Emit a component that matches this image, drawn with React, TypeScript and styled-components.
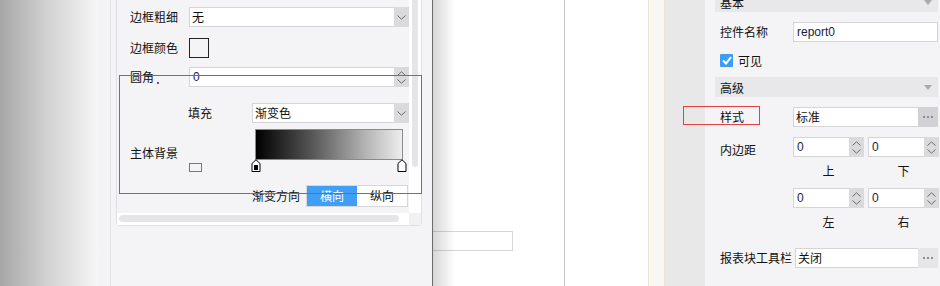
import React from "react";
import styled, { createGlobalStyle } from "styled-components";

const GlobalStyle = createGlobalStyle`
  html, body {
    margin: 0;
    padding: 0;
  }
  body {
    width: 940px;
    height: 286px;
    overflow: hidden;
    background: #ffffff;
    font-family: "Noto Sans CJK SC", "Liberation Sans", sans-serif;
    font-size: 12px;
    color: #111111;
  }
`;

const Screen = styled.div`
  position: relative;
  display: flex;
  width: 940px;
  height: 286px;
  overflow: hidden;
`;

const Backdrop = styled.div`
  flex: none;
  width: 98px;
  background: linear-gradient(to right, #a6a6a6 0%, #cfcfcf 45%, #f6f6f6 100%);
`;

const SidePanel = styled.div`
  flex: none;
  width: 335px;
  box-sizing: border-box;
  padding-left: 12px;
  background: #f4f4f6;
  border-right: 1px solid #6c6c6c;
`;

const SideInner = styled.div`
  height: 100%;
  padding-left: 5px;
  border-left: 1px solid #e3e3e7;
`;

const Card = styled.div`
  position: relative;
  width: 306px;
  height: 226px;
  box-sizing: border-box;
  display: grid;
  grid-template-columns: 292px 12px;
  grid-template-rows: 213px 12px;
  border: 1px solid #e0e0e4;
  border-top: none;
  border-radius: 0 0 4px 4px;
  background: #f4f4f6;
`;

const Rows = styled.div`
  display: flex;
  flex-direction: column;
  padding-top: 7px;
`;

const Row = styled.div<{ $top?: number; $h?: number }>`
  display: flex;
  align-items: center;
  height: ${(p) => p.$h ?? 20}px;
  margin-top: ${(p) => p.$top ?? 0}px;
`;

const Label = styled.span<{ $w?: number; $pad?: number }>`
  flex: none;
  box-sizing: border-box;
  width: ${(p) => p.$w ?? 72}px;
  padding-left: ${(p) => p.$pad ?? 13}px;
  line-height: 14px;
  white-space: nowrap;
`;

const Dot = styled.span`
  display: inline-block;
  width: 2px;
  height: 2px;
  margin-left: 3px;
  vertical-align: -2px;
  background: #8a3f9c;
`;

const Field = styled.div<{ $w: number }>`
  display: flex;
  width: ${(p) => p.$w}px;
  height: 20px;
  box-sizing: border-box;
  border: 1px solid #d5d5d8;
  background: #ffffff;
`;

const FieldText = styled.span<{ $latin?: boolean }>`
  flex: 1;
  padding-left: ${(p) => (p.$latin ? 3 : 2)}px;
  line-height: 18px;
  font-family: ${(p) =>
    p.$latin
      ? `"Liberation Sans", Arial, sans-serif`
      : `"Noto Sans CJK SC", sans-serif`};
  color: ${(p) => (p.$latin ? "#1b1b48" : "#111111")};
  white-space: nowrap;
  overflow: hidden;
`;

const SideButton = styled.span<{ $light?: boolean }>`
  flex: none;
  width: 15px;
  margin: -1px -1px -1px 0;
  display: flex;
  flex-direction: column;
  align-items: center;
  justify-content: center;
  background: ${(p) => (p.$light ? "#e6e6e8" : "#dadadd")};
`;

const MoreButton = styled.span<{ $light?: boolean }>`
  flex: none;
  width: 20px;
  margin: -1px -1px -1px 0;
  display: flex;
  align-items: center;
  justify-content: center;
  gap: 2px;
  background: ${(p) => (p.$light ? "#e6e6e8" : "#d2d2d6")};

  & > i {
    width: 2px;
    height: 2px;
    background: #8c8c90;
  }
`;

const Swatch = styled.span`
  width: 20px;
  height: 20px;
  box-sizing: border-box;
  border: 1px solid #222222;
  background: #f4f4f6;
`;

const GradientRow = styled.div`
  display: flex;
  height: 43px;
  margin-top: 6px;
`;

const MiniSwatch = styled.span`
  display: block;
  width: 13px;
  height: 9px;
  box-sizing: border-box;
  margin-top: 34px;
  border: 1px solid #df4a4a;
`;

const SwatchCell = styled.div`
  width: 63px;
`;

const Editor = styled.div`
  position: relative;
  width: 157px;
  padding-left: 4px;
`;

const GradientBar = styled.div`
  width: 148px;
  height: 31px;
  box-sizing: border-box;
  border: 1px solid #8a8a8a;
  background: linear-gradient(to right, #000000 0%, #5a5a5a 40%, #b4b4b4 75%, #ededed 100%);
`;

const Stop = styled.svg<{ $x: number }>`
  position: absolute;
  top: 30px;
  left: ${(p) => p.$x}px;
`;

const Segmented = styled.div`
  display: flex;
  width: 102px;
  height: 22px;
  box-sizing: border-box;
  border: 1px solid #d8d8dc;
  background: #ffffff;
`;

const Segment = styled.span<{ $active?: boolean }>`
  flex: 1;
  text-align: center;
  line-height: 20px;
  background: ${(p) => (p.$active ? "#419ef5" : "#ffffff")};
  color: ${(p) => (p.$active ? "#ffffff" : "#111111")};
`;

const VTrack = styled.div`
  background: #ffffff;
  padding-left: 3px;
`;

const VThumb = styled.div`
  width: 6px;
  height: 167px;
  border-radius: 0 0 3px 3px;
  background: #e5e5e7;
`;

const HTrack = styled.div`
  background: #ffffff;
  padding: 2px 0 0 2px;
`;

const HThumb = styled.div`
  width: 280px;
  height: 7px;
  border-radius: 4px;
  background: #e5e5e7;
`;

const Corner = styled.div`
  background: #f1f1f3;
`;

const Highlight = styled.div<{ $x: number; $y: number; $w: number; $h: number }>`
  position: absolute;
  left: ${(p) => p.$x}px;
  top: ${(p) => p.$y}px;
  width: ${(p) => p.$w}px;
  height: ${(p) => p.$h}px;
  box-sizing: border-box;
  border: 1px solid #e8403e;
  pointer-events: none;
`;

const Canvas = styled.div`
  position: relative;
  flex: none;
  display: flex;
  width: 215px;
  background: #ffffff;

  &::before {
    content: "";
    position: absolute;
    left: 0;
    top: 0;
    bottom: 0;
    width: 22px;
    background: linear-gradient(to right, rgba(0, 0, 0, 0.16), rgba(0, 0, 0, 0));
    pointer-events: none;
  }
`;

const Page = styled.div`
  width: 131px;
  border-right: 1px solid #c5c5c7;
  padding-top: 231px;
`;

const CanvasInput = styled.div`
  width: 80px;
  height: 20px;
  box-sizing: border-box;
  border: 1px solid #d6d6d8;
  border-left: none;
`;

const Ruler = styled.div`
  flex: none;
  width: 17px;
  box-sizing: border-box;
  background: #f8f7f4;
  border-left: 1px solid #eee3d1;
  border-right: 1px solid #eee3d1;
`;

const Gutter = styled.div`
  flex: none;
  width: 40px;
  background: #e8e8e9;
`;

const PropPanel = styled.div`
  flex: none;
  width: 235px;
  box-sizing: border-box;
  padding: 0 2px 0 10px;
  background: #f4f4f6;
`;

const PropScroll = styled.div`
  display: flex;
  flex-direction: column;
  margin-top: -8px;
`;

const SectionHead = styled.div<{ $top?: number }>`
  display: flex;
  align-items: center;
  justify-content: space-between;
  height: 20px;
  margin-top: ${(p) => p.$top ?? 0}px;
  padding: 0 6px 0 5px;
  background: #e8e8ea;
`;

const Caret = styled.span`
  width: 0;
  height: 0;
  border-left: 4px solid transparent;
  border-right: 4px solid transparent;
  border-top: 5px solid #a9a9ad;
`;

const PropRow = styled.div<{ $top?: number }>`
  display: flex;
  align-items: center;
  height: 20px;
  margin-top: ${(p) => p.$top ?? 0}px;
  padding-left: 5px;
`;

const CheckRow = styled.div`
  display: flex;
  align-items: center;
  gap: 5px;
  height: 13px;
  margin-top: 12px;
  padding-left: 5px;
`;

const CheckBox = styled.span`
  width: 13px;
  height: 13px;
  border-radius: 1px;
  background: #3f9cf3;
  display: flex;
  align-items: center;
  justify-content: center;
`;

const SpinGrid = styled.div<{ $top?: number }>`
  display: grid;
  grid-template-columns: 71px 71px;
  column-gap: 4px;
  margin-top: ${(p) => p.$top ?? 0}px;
  margin-left: 78px;
`;

const Caption = styled.span`
  margin-top: 7px;
  height: 14px;
  line-height: 14px;
  text-align: center;
`;

function Chevron({ up }: { up?: boolean }) {
  return (
    <svg width="9" height="5" viewBox="0 0 9 5">
      <path
        d={up ? "M0.5 4.5 L4.5 0.8 L8.5 4.5" : "M0.5 0.5 L4.5 4.2 L8.5 0.5"}
        fill="none"
        stroke="#6a6a6e"
        strokeWidth="1"
      />
    </svg>
  );
}

function Select({ w, value }: { w: number; value: string }) {
  return (
    <Field $w={w}>
      <FieldText>{value}</FieldText>
      <SideButton>
        <Chevron />
      </SideButton>
    </Field>
  );
}

function Spin({ w, value, light }: { w: number; value: string; light?: boolean }) {
  return (
    <Field $w={w}>
      <FieldText $latin>{value}</FieldText>
      <SideButton $light={light} style={{ gap: 3 }}>
        <Chevron up />
        <Chevron />
      </SideButton>
    </Field>
  );
}

function More({ w, value, light }: { w: number; value: string; light?: boolean }) {
  return (
    <Field $w={w}>
      <FieldText>{value}</FieldText>
      <MoreButton $light={light}>
        <i />
        <i />
        <i />
      </MoreButton>
    </Field>
  );
}

function StopMark({ x, filled }: { x: number; filled?: boolean }) {
  return (
    <Stop $x={x} width="10" height="13" viewBox="0 0 10 13">
      <path d="M5 0.8 L9 4.5 L9 12.5 L1 12.5 L1 4.5 Z" fill="#ffffff" stroke="#000000" strokeWidth="1" />
      {filled && <rect x="3" y="6" width="4" height="5" fill="#000000" />}
    </Stop>
  );
}

export default function App() {
  return (
    <>
      <GlobalStyle />
      <Screen>
        <Backdrop />
        <SidePanel>
          <SideInner>
            <Card>
              <Rows>
                <Row>
                  <Label>边框粗细</Label>
                  <Select w={220} value="无" />
                </Row>
                <Row $top={11}>
                  <Label>边框颜色</Label>
                  <Swatch />
                </Row>
                <Row $top={9}>
                  <Label>
                    圆角
                    <Dot />
                  </Label>
                  <Spin w={220} value="0" />
                </Row>
                <Row $top={16}>
                  <Label $w={135} $pad={71}>
                    填充
                  </Label>
                  <Select w={157} value="渐变色" />
                </Row>
                <GradientRow>
                  <Label style={{ paddingTop: 17 }}>主体背景</Label>
                  <SwatchCell>
                    <MiniSwatch />
                  </SwatchCell>
                  <Editor>
                    <GradientBar />
                    <StopMark x={0} filled />
                    <StopMark x={146} />
                  </Editor>
                </GradientRow>
                <Row $top={13} $h={22}>
                  <Label $w={189} $pad={135}>
                    渐变方向
                  </Label>
                  <Segmented>
                    <Segment $active>横向</Segment>
                    <Segment>纵向</Segment>
                  </Segmented>
                </Row>
              </Rows>
              <VTrack>
                <VThumb />
              </VTrack>
              <HTrack>
                <HThumb />
              </HTrack>
              <Corner />
              <Highlight $x={2} $y={75} $w={303} $h={119} />
            </Card>
          </SideInner>
        </SidePanel>
        <Canvas>
          <Page>
            <CanvasInput />
          </Page>
        </Canvas>
        <Ruler />
        <Gutter />
        <PropPanel>
          <PropScroll>
            <SectionHead>
              <span>基本</span>
              <Caret />
            </SectionHead>
            <PropRow $top={10}>
              <Label $w={73} $pad={0}>
                控件名称
              </Label>
              <Field $w={146}>
                <FieldText $latin>report0</FieldText>
              </Field>
            </PropRow>
            <CheckRow>
              <CheckBox>
                <svg width="10" height="9" viewBox="0 0 10 9">
                  <path d="M1 4.5 L4 7.5 L9 1.2" fill="none" stroke="#ffffff" strokeWidth="2" />
                </svg>
              </CheckBox>
              <span>可见</span>
            </CheckRow>
            <SectionHead $top={10}>
              <span>高级</span>
              <Caret />
            </SectionHead>
            <PropRow $top={10}>
              <Label $w={73} $pad={0}>
                样式
              </Label>
              <More w={146} value="标准" />
            </PropRow>
            <PropRow $top={15} style={{ alignItems: "flex-start", height: "auto" }}>
              <Label $w={73} $pad={0} style={{ marginTop: 1 }}>
                内边距
              </Label>
            </PropRow>
            <SpinGrid $top={-20}>
              <Spin w={71} value="0" />
              <Spin w={71} value="0" />
              <Caption>上</Caption>
              <Caption>下</Caption>
            </SpinGrid>
            <SpinGrid $top={10}>
              <Spin w={71} value="0" />
              <Spin w={71} value="0" />
              <Caption>左</Caption>
              <Caption>右</Caption>
            </SpinGrid>
            <PropRow $top={19}>
              <Label $w={75} $pad={0}>
                报表块工具栏
              </Label>
              <More w={143} value="关闭" light />
            </PropRow>
          </PropScroll>
        </PropPanel>
        <Highlight $x={683} $y={106} $w={77} $h={19} />
      </Screen>
    </>
  );
}
